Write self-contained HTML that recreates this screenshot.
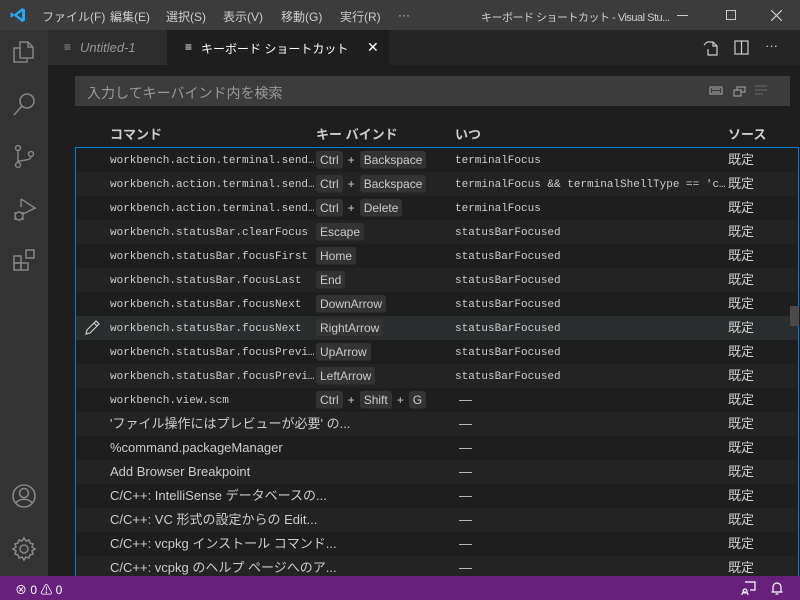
<!DOCTYPE html>
<html><head><meta charset="utf-8"><style>
*{margin:0;padding:0;box-sizing:border-box}
body{width:800px;height:600px;overflow:hidden;background:#1e1e1e;font-family:"Liberation Sans","Noto Sans CJK JP",sans-serif;color:#ccc;position:relative;font-size:13px}
.abs{position:absolute}
#title{left:0;top:0;width:800px;height:30px;background:#3c3c3c;color:#ccc;font-size:12px}
#title span{position:absolute;top:8px;white-space:nowrap}
#act{left:0;top:30px;width:48px;height:546px;background:#333}
#tabs{left:48px;top:30px;width:752px;height:35px;background:#252526}
#status{left:0;top:576px;width:800px;height:24px;background:#68217a;color:#fff;font-size:12px}
.row{position:absolute;left:0;width:722px;height:24px;line-height:24px}
.row.alt{background:#232323}
.row.sel{background:#2a2d2e}
.cmd{position:absolute;left:34px;top:1px;font-family:"Liberation Mono",monospace;font-size:11px;color:#ccc;white-space:nowrap}
.cmdt{position:absolute;left:34px;top:0;font-size:13px;color:#ccc;white-space:nowrap}
.kb{position:absolute;left:240px;top:3px;height:18px;font-size:12px;white-space:nowrap;display:flex;align-items:center;line-height:16px}
.k{background:#333;border-bottom:1px solid #2a2a2a;border-radius:3px;padding:1px 4px;height:18px;line-height:16px;color:#ccc}
.p{margin:0 5px;color:#ccc}
.wh{position:absolute;left:379px;top:1px;font-family:"Liberation Mono",monospace;font-size:11px;color:#ccc;white-space:nowrap}
.dash{position:absolute;left:383px;top:0;font-size:13px}
.src{position:absolute;left:652px;top:0;font-size:13px}
</style></head><body>
<div id="title" class="abs">
<svg class="abs" style="left:10px;top:7px" width="16" height="16" viewBox="0 0 16 16"><path d="M12 1 L15 2.5 V13.5 L12 15 L4 8.5 L1.5 10.5 L0.5 10 V6 L1.5 5.5 L4 7.5 Z M12 4.5 L7 8 L12 11.5Z" fill="#23a9f2"/></svg>
<span style="left:42px">ファイル(F)</span><span style="left:110px">編集(E)</span><span style="left:166px">選択(S)</span><span style="left:223px">表示(V)</span><span style="left:281px">移動(G)</span><span style="left:340px">実行(R)</span><span style="left:398px">···</span>
<span style="left:481px;font-size:11px;top:9px;letter-spacing:-0.5px">キーボード ショートカット - Visual Stu...</span>
<div class="abs" style="left:677px;top:15px;width:11px;height:1px;background:#ccc"></div>
<div class="abs" style="left:726px;top:10px;width:10px;height:10px;border:1px solid #ccc"></div>
<svg class="abs" style="left:771px;top:10px" width="11" height="11"><path d="M0 0L11 11M11 0L0 11" stroke="#ccc" stroke-width="1.2"/></svg>
</div>
<div id="act" class="abs">
<svg class="abs" style="left:12px;top:10px" width="24" height="26" fill="none" stroke="#858585" stroke-width="1.5"><path d="M8 2h8l5 5v11h-13z M16 2v5h5 M8 8H2v14h13v-4"/></svg>
<svg class="abs" style="left:12px;top:62px" width="24" height="26" fill="none" stroke="#858585" stroke-width="1.6"><circle cx="15" cy="9" r="7"/><path d="M10 14L2 23"/></svg>
<svg class="abs" style="left:12px;top:114px" width="24" height="26" fill="none" stroke="#858585" stroke-width="1.5"><circle cx="6" cy="4" r="2.5"/><circle cx="6" cy="21" r="2.5"/><circle cx="19" cy="10" r="2.5"/><path d="M6 6.5v12 M19 12.5c0 5-13 3-13 6"/></svg>
<svg class="abs" style="left:12px;top:166px" width="26" height="26" fill="none" stroke="#858585" stroke-width="1.5"><path d="M9 3l14 9-12 6 M9 3v8"/><circle cx="7" cy="20" r="4"/><path d="M2 17h3M2 23h3M9 17h3M9 23h3"/></svg>
<svg class="abs" style="left:12px;top:218px" width="26" height="26" fill="none" stroke="#858585" stroke-width="1.5"><rect x="2" y="8" width="7" height="7"/><rect x="2" y="15" width="7" height="7"/><rect x="9" y="15" width="7" height="7"/><rect x="14" y="2" width="8" height="8"/></svg>
<svg class="abs" style="left:12px;top:454px" width="26" height="26" fill="none" stroke="#858585" stroke-width="1.6"><circle cx="12" cy="12" r="11"/><circle cx="12" cy="9" r="4.5"/><path d="M4 19c4-5 12-5 16 0"/></svg>
<svg class="abs" style="left:11px;top:506px" width="26" height="26" fill="none" stroke="#858585" stroke-width="1.6"><circle cx="13" cy="13" r="4"/><path d="M13 2l2 3 3-1 1 3 3 1-1 3 3 2-3 2 1 3-3 1-1 3-3-1-2 3-2-3-3 1-1-3-3-1 1-3-3-2 3-2-1-3 3-1 1-3 3 1z"/></svg>
</div>
<div id="tabs" class="abs">
<div class="abs" style="left:0;top:0;width:119px;height:35px;background:#2d2d2d"></div>
<span class="abs" style="left:16px;top:10px;color:#969696;font-size:12px">≡</span>
<span class="abs" style="left:32px;top:10px;color:#969696;font-style:italic">Untitled-1</span>
<div class="abs" style="left:119px;top:0;width:222px;height:35px;background:#1e1e1e"></div>
<span class="abs" style="left:137px;top:10px;color:#fff;font-size:12px">≡</span>
<span class="abs" style="left:153px;top:10px;color:#fff;font-size:12px">キーボード ショートカット</span>
<span class="abs" style="left:319px;top:9px;color:#fff;font-size:14px">✕</span>
<svg class="abs" style="left:655px;top:10px" width="16" height="16" fill="none" stroke="#ccc" stroke-width="1.2"><path d="M4 2h6l4 4v9H5V9 M10 2v4h4 M1 5l3-3"/></svg>
<svg class="abs" style="left:686px;top:10px" width="15" height="15" fill="none" stroke="#ccc" stroke-width="1.2"><rect x="1" y="1" width="13" height="13"/><path d="M7.5 1v13"/></svg>
<span class="abs" style="left:717px;top:8px;color:#ccc">···</span>
</div>
<div class="abs" style="left:75px;top:76px;width:715px;height:30px;background:#3c3c3c"></div>
<span class="abs" style="left:87px;top:83px;color:#999;font-size:14px">入力してキーバインド内を検索</span>
<svg class="abs" style="left:709px;top:84px" width="60" height="14" fill="none" stroke="#aaa" stroke-width="1"><rect x="1" y="3" width="12" height="7"/><path d="M3 5h8M3 8h8"/><rect x="25" y="6" width="7" height="6"/><path d="M28 6V3h8v5h-4"/><path d="M46 2h12M46 6h12M46 10h8" stroke="#666"/></svg>
<span class="abs" style="left:110px;top:124px;font-weight:bold;font-size:13px">コマンド</span>
<span class="abs" style="left:316px;top:124px;font-weight:bold;font-size:13px">キー バインド</span>
<span class="abs" style="left:455px;top:124px;font-weight:bold;font-size:13px">いつ</span>
<span class="abs" style="left:728px;top:124px;font-weight:bold;font-size:13px">ソース</span>
<div class="abs" style="left:75px;top:147px;width:724px;height:430px;border:1px solid #007fd4;border-bottom:none;overflow:hidden">
<div class="row" style="top:0"><span class="cmd">workbench.action.terminal.send…</span><div class="kb"><span class="k">Ctrl</span><span class="p">+</span><span class="k">Backspace</span></div><span class="wh">terminalFocus</span><span class="src">既定</span></div>
<div class="row alt" style="top:24px"><span class="cmd">workbench.action.terminal.send…</span><div class="kb"><span class="k">Ctrl</span><span class="p">+</span><span class="k">Backspace</span></div><span class="wh">terminalFocus &amp;&amp; terminalShellType == 'c…</span><span class="src">既定</span></div>
<div class="row" style="top:48px"><span class="cmd">workbench.action.terminal.send…</span><div class="kb"><span class="k">Ctrl</span><span class="p">+</span><span class="k">Delete</span></div><span class="wh">terminalFocus</span><span class="src">既定</span></div>
<div class="row alt" style="top:72px"><span class="cmd">workbench.statusBar.clearFocus</span><div class="kb"><span class="k">Escape</span></div><span class="wh">statusBarFocused</span><span class="src">既定</span></div>
<div class="row" style="top:96px"><span class="cmd">workbench.statusBar.focusFirst</span><div class="kb"><span class="k">Home</span></div><span class="wh">statusBarFocused</span><span class="src">既定</span></div>
<div class="row alt" style="top:120px"><span class="cmd">workbench.statusBar.focusLast</span><div class="kb"><span class="k">End</span></div><span class="wh">statusBarFocused</span><span class="src">既定</span></div>
<div class="row" style="top:144px"><span class="cmd">workbench.statusBar.focusNext</span><div class="kb"><span class="k">DownArrow</span></div><span class="wh">statusBarFocused</span><span class="src">既定</span></div>
<div class="row sel" style="top:168px"><svg style="position:absolute;left:8px;top:4px" width="16" height="16" fill="none" stroke="#ccc" stroke-width="1.2"><path d="M2 14l1-4 9-9 3 3-9 9z M10 3l3 3"/></svg><span class="cmd">workbench.statusBar.focusNext</span><div class="kb"><span class="k">RightArrow</span></div><span class="wh">statusBarFocused</span><span class="src">既定</span></div>
<div class="row" style="top:192px"><span class="cmd">workbench.statusBar.focusPrevi…</span><div class="kb"><span class="k">UpArrow</span></div><span class="wh">statusBarFocused</span><span class="src">既定</span></div>
<div class="row alt" style="top:216px"><span class="cmd">workbench.statusBar.focusPrevi…</span><div class="kb"><span class="k">LeftArrow</span></div><span class="wh">statusBarFocused</span><span class="src">既定</span></div>
<div class="row" style="top:240px"><span class="cmd">workbench.view.scm</span><div class="kb"><span class="k">Ctrl</span><span class="p">+</span><span class="k">Shift</span><span class="p">+</span><span class="k">G</span></div><span class="dash">—</span><span class="src">既定</span></div>
<div class="row alt" style="top:264px"><span class="cmdt">'ファイル操作にはプレビューが必要' の...</span><span class="dash">—</span><span class="src">既定</span></div>
<div class="row" style="top:288px"><span class="cmdt">%command.packageManager</span><span class="dash">—</span><span class="src">既定</span></div>
<div class="row alt" style="top:312px"><span class="cmdt">Add Browser Breakpoint</span><span class="dash">—</span><span class="src">既定</span></div>
<div class="row" style="top:336px"><span class="cmdt">C/C++: IntelliSense データベースの...</span><span class="dash">—</span><span class="src">既定</span></div>
<div class="row alt" style="top:360px"><span class="cmdt">C/C++: VC 形式の設定からの Edit...</span><span class="dash">—</span><span class="src">既定</span></div>
<div class="row" style="top:384px"><span class="cmdt">C/C++: vcpkg インストール コマンド...</span><span class="dash">—</span><span class="src">既定</span></div>
<div class="row alt" style="top:408px"><span class="cmdt">C/C++: vcpkg のヘルプ ページへのア...</span><span class="dash">—</span><span class="src">既定</span></div>
</div>
<div class="abs" style="left:790px;top:306px;width:9px;height:20px;background:#4a4a4a"></div>
<div id="status" class="abs">
<span class="abs" style="left:15px;top:5px">⊗ 0 ⚠ 0</span>
<svg class="abs" style="left:740px;top:5px" width="16" height="15" fill="none" stroke="#fff" stroke-width="1.2"><path d="M5 1h10v8h-5 M2 14c0-4 6-4 6 0 M5 8a2 2 0 1 0 .1 0"/></svg>
<svg class="abs" style="left:770px;top:4px" width="14" height="16" fill="none" stroke="#fff" stroke-width="1.2"><path d="M3 12V7a4 4 0 0 1 8 0v5h1.5H1.5z M5.5 14h3"/></svg>
</div>
</body></html>
